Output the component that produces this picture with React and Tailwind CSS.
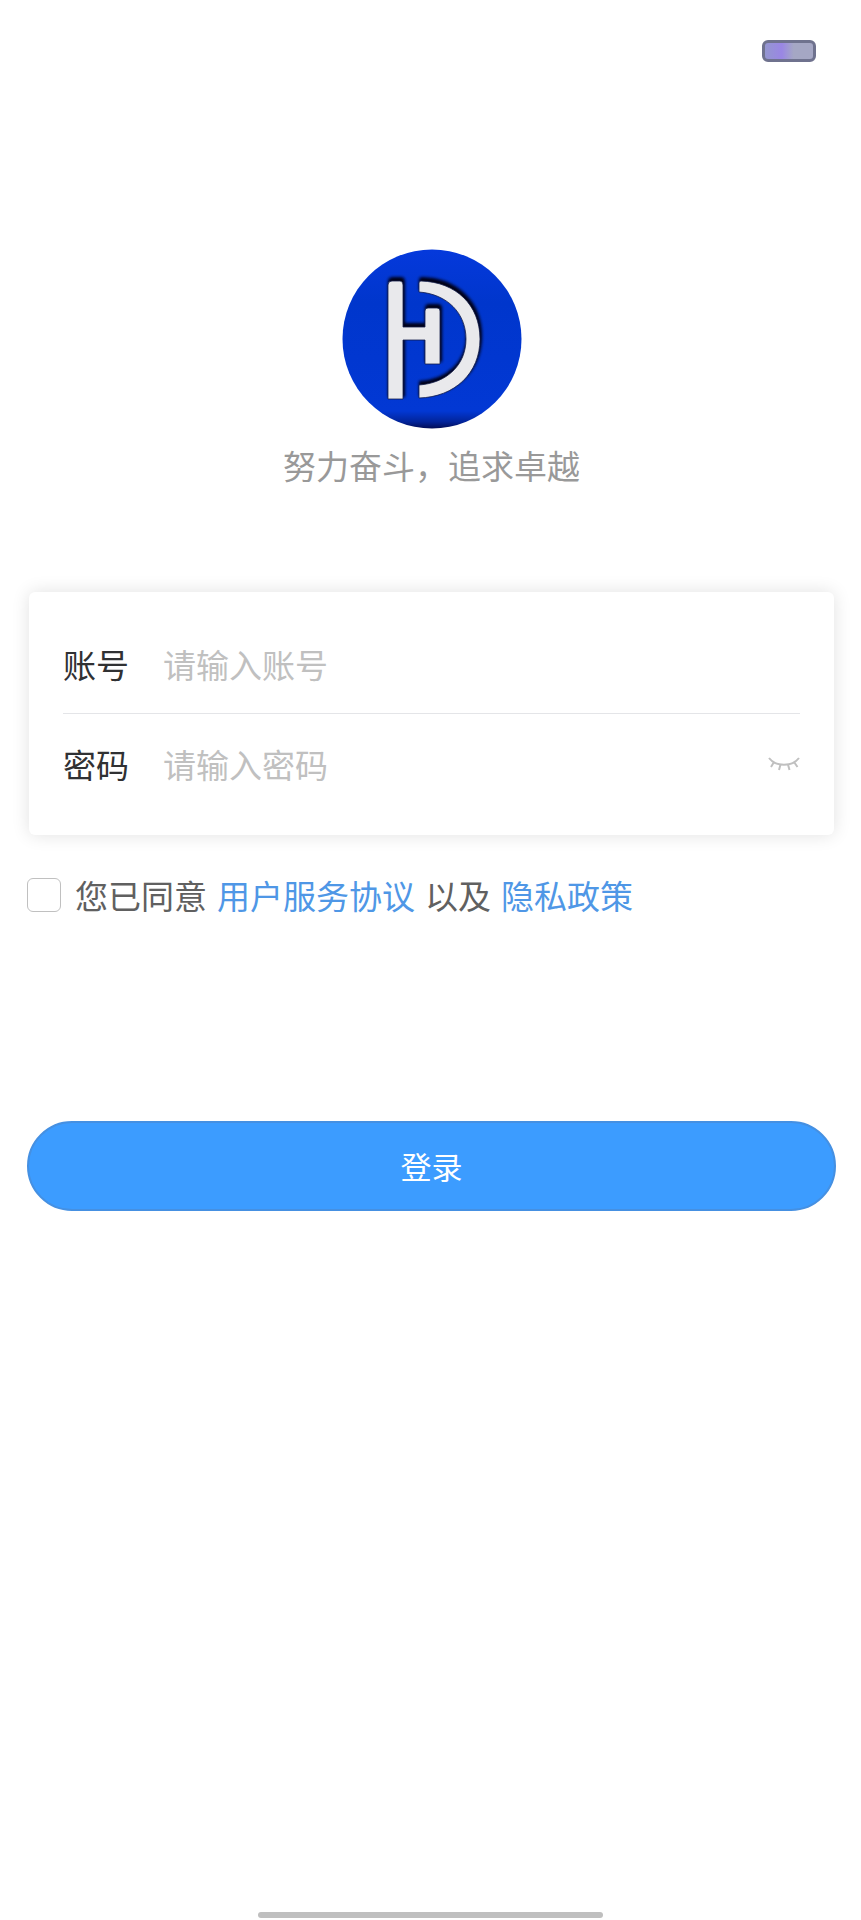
import React, { useState } from 'react';

const Logo = () => (
    <svg viewBox="0 0 180 180" className="w-[180px] h-[180px]" role="img" aria-label="HD">
        <defs>
            <clipPath id="logo-clip">
                <circle cx="90" cy="90" r="89.5" />
            </clipPath>
            <linearGradient id="logo-bg" x1="0" y1="0" x2="0" y2="1">
                <stop offset="0" stopColor="#0539dc" />
                <stop offset="0.3" stopColor="#0036cc" />
                <stop offset="0.9" stopColor="#0238d4" />
                <stop offset="0.96" stopColor="#02249a" />
                <stop offset="1" stopColor="#020b50" />
            </linearGradient>
            <filter id="logo-shadow" x="-20%" y="-20%" width="140%" height="140%">
                <feGaussianBlur stdDeviation="1.8" />
            </filter>
            <path id="logo-h" d="M46 36q0-4 4-4h8q3 0 3 4v42h22V62q0-3 3-3h9q3 0 3 3v53H83V91H61v59H46Z" />
            <path id="logo-d" d="M77 34q0-2 2-2C114 33 138 56 138 90s-25 58-61 59v-13c28-2 47-20 47-46S105 45 77 43Z" />
        </defs>
        <g clipPath="url(#logo-clip)">
            <rect width="180" height="180" fill="url(#logo-bg)" />
            <g filter="url(#logo-shadow)" fill="#030617" stroke="#030617" strokeWidth="2">
                <use href="#logo-h" x="1" y="-3" />
                <use href="#logo-d" x="1" y="-3" />
            </g>
            <g fill="#e9e9ec" stroke="#14204f" strokeWidth="0.8">
                <use href="#logo-h" />
                <use href="#logo-d" />
            </g>
        </g>
    </svg>
);

const ClosedEye = () => (
    <svg viewBox="0 0 32 16" className="w-8 h-4" fill="none" stroke="currentColor" strokeWidth="2">
        <path d="M1 2C8 11 24 11 31 2" />
        <path d="M6 6 3 11M12.500 8.500 11 14M20 8.500 21.500 14M26 6 29.500 11" />
    </svg>
);

const Login = () => {
    const [account, setAccount] = useState('');
    const [password, setPassword] = useState('');
    const [visible, setVisible] = useState(false);
    const [agreed, setAgreed] = useState(false);

    const handleSubmit = (e) => {
        e.preventDefault();
    };

    return (
        <div className="min-h-screen flex flex-col bg-white text-[33px] leading-[48px] font-['Noto_Sans_CJK_SC',sans-serif]">
            {/* Battery */}
            <div className="flex justify-end pt-10 pr-[45px]">
                <div className="w-[54px] h-[22px] rounded-md border-3 border-[#6f728e] bg-linear-to-r from-[#9496d0] via-[#9a86e4] via-35% to-[#a5a7c4] to-60%" />
            </div>

            <main className="pl-[27px] pr-[25px]">
                <header className="flex flex-col items-center mt-[187px]">
                    <Logo />
                    <p className="mt-3 text-[#999999]">努力奋斗，追求卓越</p>
                </header>

                <form onSubmit={handleSubmit} className="mt-[103px]">
                    <div className="mx-0.5 px-[34px] pt-[22px] pb-[21px] rounded-md bg-white shadow-[0_0_18px_rgba(0,0,0,0.12)]">
                        <div className="flex items-center h-[100px] border-b border-[#e4e5e8]">
                            <label htmlFor="account" className="w-[100px] shrink-0 text-[#303133]">账号</label>
                            <input
                                id="account"
                                type="text"
                                value={account}
                                onChange={(e) => setAccount(e.target.value)}
                                className="flex-1 min-w-0 outline-none text-[#303133] placeholder:text-[#c0c0c0]"
                                placeholder="请输入账号"
                            />
                        </div>
                        <div className="flex items-center h-[100px]">
                            <label htmlFor="password" className="w-[100px] shrink-0 text-[#303133]">密码</label>
                            <input
                                id="password"
                                type={visible ? 'text' : 'password'}
                                value={password}
                                onChange={(e) => setPassword(e.target.value)}
                                className="flex-1 min-w-0 outline-none text-[#303133] placeholder:text-[#c0c0c0]"
                                placeholder="请输入密码"
                            />
                            <button type="button" aria-label="显示密码" onClick={() => setVisible(!visible)} className="text-[#c0c0c0]">
                                <ClosedEye />
                            </button>
                        </div>
                    </div>

                    <div className="flex items-center mt-9">
                        <input
                            id="agree"
                            type="checkbox"
                            checked={agreed}
                            onChange={(e) => setAgreed(e.target.checked)}
                            className="appearance-none w-[34px] h-[34px] shrink-0 rounded-md border border-[#c0c0c0] bg-white checked:bg-[#3c9cff]"
                        />
                        <div className="flex flex-wrap gap-x-2.5 ml-3.5 text-[#606060]">
                            <label htmlFor="agree">您已同意</label>
                            <a href="#service" className="text-[#4f97e6]">用户服务协议</a>
                            <span>以及</span>
                            <a href="#privacy" className="text-[#4f97e6]">隐私政策</a>
                        </div>
                    </div>

                    <button
                        type="submit"
                        className="w-full h-[90px] mt-[202px] rounded-full border-2 border-[#4590e2] bg-[#3c9cff] text-white text-[31px]"
                    >
                        登录
                    </button>
                </form>
            </main>

            {/* Home indicator */}
            <div className="w-2/5 h-1.5 mt-auto mb-0.5 mx-auto rounded-full bg-[#bfbfbf]" />
        </div>
    );
};

export default Login;
